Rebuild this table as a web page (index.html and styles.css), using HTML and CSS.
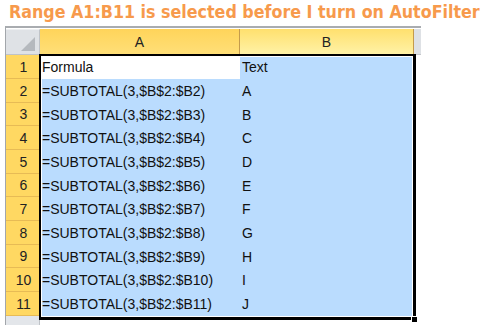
FILE: index.html
```html
<!DOCTYPE html>
<html>
<head>
<meta charset="utf-8">
<link rel="stylesheet" href="styles.css">
</head>
<body>
<div class="title">Range A1:B11 is selected before I turn on AutoFilter</div>
<div class="frame">
  <div class="sheet">
    <div class="corner"><span class="tri"></span></div>
    <div class="colhead ca">A</div>
    <div class="colhead cb">B</div>
    <div class="colhead cx"></div>

    <div class="rowhead">1</div><div class="cell active">Formula</div><div class="cell">Text</div><div class="pad"></div>
    <div class="rowhead">2</div><div class="cell">=SUBTOTAL(3,$B$2:$B2)</div><div class="cell">A</div><div class="pad"></div>
    <div class="rowhead">3</div><div class="cell">=SUBTOTAL(3,$B$2:$B3)</div><div class="cell">B</div><div class="pad"></div>
    <div class="rowhead">4</div><div class="cell">=SUBTOTAL(3,$B$2:$B4)</div><div class="cell">C</div><div class="pad"></div>
    <div class="rowhead">5</div><div class="cell">=SUBTOTAL(3,$B$2:$B5)</div><div class="cell">D</div><div class="pad"></div>
    <div class="rowhead">6</div><div class="cell">=SUBTOTAL(3,$B$2:$B6)</div><div class="cell">E</div><div class="pad"></div>
    <div class="rowhead">7</div><div class="cell">=SUBTOTAL(3,$B$2:$B7)</div><div class="cell">F</div><div class="pad"></div>
    <div class="rowhead">8</div><div class="cell">=SUBTOTAL(3,$B$2:$B8)</div><div class="cell">G</div><div class="pad"></div>
    <div class="rowhead">9</div><div class="cell">=SUBTOTAL(3,$B$2:$B9)</div><div class="cell">H</div><div class="pad"></div>
    <div class="rowhead">10</div><div class="cell">=SUBTOTAL(3,$B$2:$B10)</div><div class="cell">I</div><div class="pad"></div>
    <div class="rowhead">11</div><div class="cell">=SUBTOTAL(3,$B$2:$B11)</div><div class="cell">J</div><div class="pad"></div>
    <div class="rowhead next"></div><div class="blank"></div><div class="blank"></div><div class="pad"></div>

    <div class="selection"><span class="handle"></span></div>
  </div>
</div>
</body>
</html>
```

FILE: styles.css
```css
html, body {
  margin: 0;
  padding: 0;
  background: #fff;
  overflow: hidden;
}
body {
  width: 486px;
  height: 325px;
  font-family: "Liberation Sans", Arial, sans-serif;
}
.title {
  height: 26px;
  box-sizing: border-box;
  padding: 2px 0 0 9px;
  font-family: "DejaVu Sans Condensed", "DejaVu Sans", sans-serif;
  font-weight: bold;
  font-size: 17.7px;
  line-height: 20px;
  color: #F79A4C;
  white-space: nowrap;
}
.frame {
  margin-left: 5px;
  width: 416px;
  box-sizing: border-box;
  border-top: 2px solid #A9ACB0;
  border-left: 1px solid #A2A6AB;
  padding-top: 1px;
  background: #fff;
}
.sheet {
  position: relative;
  display: grid;
  grid-template-columns: 34px 200px 174px 7px;
  grid-template-rows: 26px 24px 24px 23px 24px 24px 23px 24px 24px 23px 24px 24px 10px;
  font-size: 14px;
  color: #111;
}
.corner {
  position: relative;
  background: #DFE2E6;
  border-right: 1px solid #BFC3C8;
  border-bottom: 1px solid #BFC3C8;
  border-top: 1px solid #EEF0F2;
}
.tri {
  position: absolute;
  right: 4px;
  bottom: 3px;
  width: 0;
  height: 0;
  border-left: 14px solid transparent;
  border-bottom: 14px solid #B5B9BE;
}
.colhead {
  display: flex;
  align-items: center;
  justify-content: center;
  border-right: 1px solid #C49B4C;
  border-bottom: 1px solid #C49B4C;
  color: #222;
  font-size: 14px;
  padding-top: 1px;
}
.ca {
  background: linear-gradient(#FFD45A, #FFDF78);
}
.cb {
  background: linear-gradient(#FFE06E, #FFF2A6);
}
.cx {
  background: #DEE1E5;
  border-right: none;
  border-bottom: 1px solid #C5C8CC;
}
.rowhead {
  display: flex;
  align-items: center;
  justify-content: center;
  background: #FFD862;
  border-right: 1px solid #C49B4C;
  border-bottom: 1px solid #E7BB55;
  color: #222;
  padding-left: 2px;
}
.rowhead.next {
  background: #E3E6EA;
  border-bottom: none;
  border-right: 1px solid #BFC3C8;
}
.cell {
  display: flex;
  align-items: center;
  padding-left: 2px;
  background: #BADCFE;
  white-space: nowrap;
  overflow: hidden;
}
.cell.active {
  background: #fff;
}
.blank, .pad {
  background: #fff;
}
.selection {
  position: absolute;
  left: 33px;
  top: 25px;
  width: 377px;
  height: 266px;
  box-sizing: border-box;
  border-style: solid;
  border-color: #000;
  border-width: 2px 3px 3px 2px;
  box-shadow: inset 0 0 0 1px #fff;
  pointer-events: none;
}
.handle {
  position: absolute;
  right: -4px;
  bottom: -5px;
  width: 5px;
  height: 5px;
  background: #000;
  border-left: 1px solid #fff;
  border-top: 1px solid #fff;
}
```
